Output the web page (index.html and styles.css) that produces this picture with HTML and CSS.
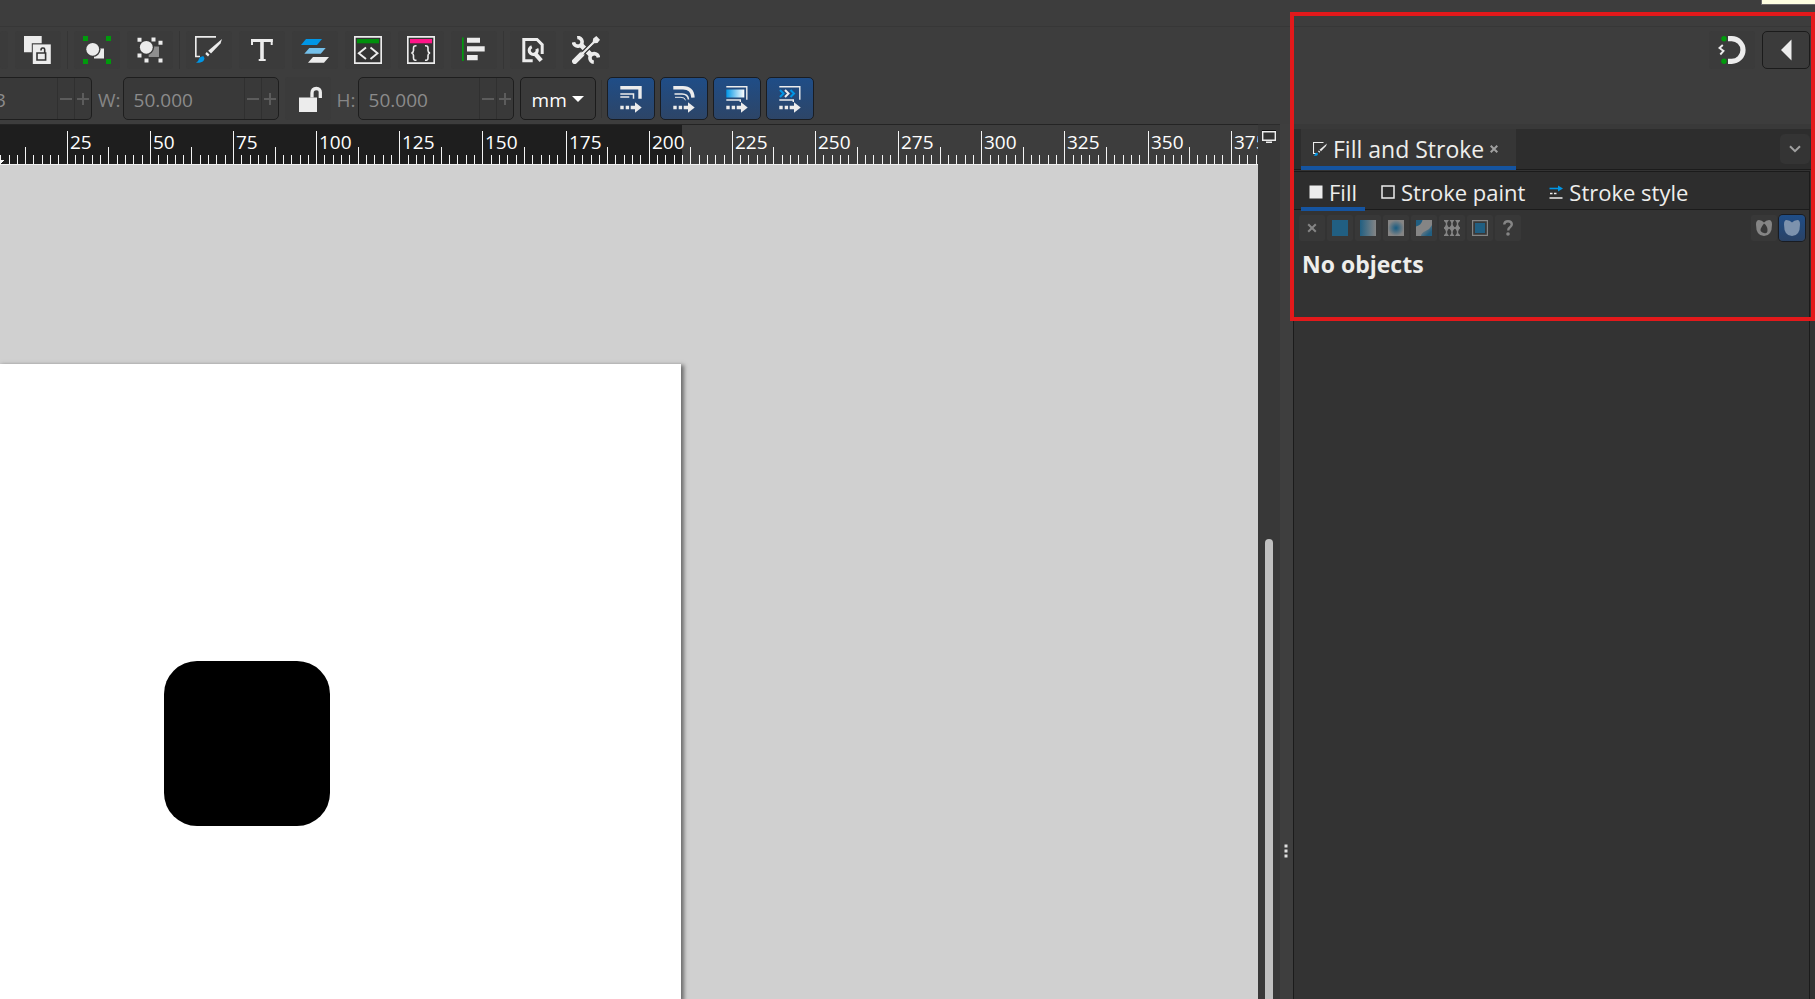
FILE: index.html
```html
<!DOCTYPE html>
<html lang="en">
<head>
<meta charset="utf-8">
<title>Vector editor</title>
<link rel="stylesheet" href="styles.css">
</head>
<body>
<div class="app">
  <div class="menubar"></div>

  <div class="toolbar commands" role="toolbar" aria-label="Commands">
    <button class="tool cut" aria-label="Clone"></button>
    <button class="tool" aria-label="Unlink clone"><svg viewBox="0 0 28 28"><path d="M0 0h17.7v7.3H7.8v9H0z" fill="#ececec"/><path d="M8.8 8.4h18V28h-18z" fill="#ececec"/><path d="M13 17h8.600v7H13zM20.700 17v-3.500q0-1.500-1.500-1.500h-.7q-1.500 0-1.500 2.500" fill="none" stroke="#333" stroke-width="1.600"/></svg></button>
    <span class="sep"></span>
    <button class="tool" aria-label="Group"><svg viewBox="0 0 28 28"><path d="M0 0h5v5H0zM23 0h5v5h-5zM0 23h5v5H0zM23 23h5v5h-5z" fill="#009a0c"/><path d="M11 12.500h10v10H11z" fill="#ececec"/><circle cx="9.700" cy="13.300" r="7.800" fill="#3b3b3b"/><circle cx="9.700" cy="13.300" r="6.400" fill="#ececec"/></svg></button>
    <button class="tool" aria-label="Ungroup"><svg viewBox="0 0 28 28"><path d="M12.700 10.500h10.300v10.500H12.700z" fill="#8f8f8f"/><circle cx="10.300" cy="11.300" r="7.800" fill="#3b3b3b"/><circle cx="10.300" cy="11.300" r="6.400" fill="#ececec"/><path d="M1.500 1.700h4v4h-4zM15.500 1.500h4v4h-4zM22.500 4.700h4v4h-4zM1.500 17.500h4v4h-4zM8.500 22.500h4v4h-4zM22.500 22.500h4v4h-4z" fill="#ececec"/></svg></button>
    <span class="sep"></span>
    <button class="tool" aria-label="Fill and Stroke"><svg viewBox="0 0 28 28"><path d="M21 .8H.8V20.500H5" fill="none" stroke="#ececec" stroke-width="1.700"/><path d="M27 3L25.500 7.500 16 17.500 13.200 14.800z" fill="#ececec"/><path d="M11.700 16l2.800 2.500-1.500 2-2.700-2.500z" fill="#ececec"/><path d="M1 26.700q2.500-1 3-4 1.500-3 4.500-2.500l1 2q-.5 3.500-3.500 4-2 .8-5 .5z" fill="#0096e6"/></svg></button>
    <button class="tool" aria-label="Text and Font"><svg viewBox="0 0 28 28"><g stroke="#ececec" fill="none"><path d="M3 4.500h21.700" stroke-width="3"/><path d="M4 3v6M23.700 3v6" stroke-width="2"/><path d="M14 4v20" stroke-width="3.600"/><path d="M10.700 24h7" stroke-width="2"/></g></svg></button>
    <button class="tool" aria-label="Layers and Objects"><svg viewBox="0 0 28 28"><path d="M5 3h16l-5 6H0z" fill="#0096e6"/><path d="M8.300 12h16.400l-5 5.700H3.300z" fill="#74c0ea"/><path d="M12 21h16l-5 5.700H7z" fill="#ececec"/></svg></button>
    <button class="tool" aria-label="XML Editor"><svg viewBox="0 0 28 28"><path d="M.8.8h26.400v26.400H.8z" fill="#333" stroke="#ececec" stroke-width="1.700"/><path d="M3 3h22v4.300H3z" fill="#008f0c"/><path d="M12 11.500L4.800 17.200 12 23M16.500 11.500l7 5.700-7 5.800" fill="none" stroke="#ececec" stroke-width="1.900"/></svg></button>
    <button class="tool" aria-label="Selectors and CSS"><svg viewBox="0 0 28 28"><path d="M.8.8h26.400v26.400H.8z" fill="#333" stroke="#ececec" stroke-width="1.700"/><path d="M3 3h22v4.300H3z" fill="#ff1588"/><path d="M9.500 9.700Q6.500 9.500 6.500 12v2.500q0 2-2 2.500 2 .5 2 2.500V22q0 2.500 3 2.300M18 9.700q3-.2 3 2.300v2.500q0 2 2 2.500-2 .5-2 2.500V22q0 2.500-3 2.300" fill="none" stroke="#ececec" stroke-width="1.600"/></svg></button>
    <button class="tool" aria-label="Align and Distribute"><svg viewBox="0 0 28 28"><path d="M2 1.500h1.700v23.500H2z" fill="#009a0c"/><path d="M7 1.700h13v5H7zM7 10.300h17.700v5.300H7zM7 19h10.700v5.300H7z" fill="#ececec"/></svg></button>
    <span class="sep"></span>
    <button class="tool" aria-label="Document Properties"><svg viewBox="0 0 28 28"><path d="M13.700 24.700H4.800V3.400h13.200l5.200 5.200V18" fill="none" stroke="#ececec" stroke-width="3"/><path d="M13.500 10.500a4 4 0 1 0 4.500 3" fill="none" stroke="#ececec" stroke-width="3.200" transform="rotate(-12 14 14)"/><path d="M15.500 17l6.700 7.700" stroke="#ececec" stroke-width="4.200"/></svg></button>
    <button class="tool" aria-label="Preferences"><svg viewBox="0 0 28 28"><g fill="none" stroke="#ececec"><path d="M5.200 1.600a4.300 4.300 0 1 1-3.700 4.700" stroke-width="3.600"/><path d="M8.500 8.500l4 4M15.500 15.500l4 4" stroke-width="5"/><path d="M26.500 21.500a4.300 4.300 0 1 0-4.700 4.700" stroke-width="3.600"/><path d="M9 19L24 4" stroke-width="2.200"/><path d="M2.700 25.300l7-7" stroke-width="5.400" stroke-linecap="round"/></g><path d="M24.300 0L28 3.700 25.500 7l-3 .3L20.700 5.500l.5-3z" fill="#ececec"/><path d="M9 16.500L19 6.500M12 18.500L21.500 9" stroke="#3b3b3b" stroke-width="1"/></svg></button>
    <div class="right">
      <button class="tool" aria-label="Snap controls"><svg viewBox="0 0 28 28"><circle cx="6" cy="2.700" r="2.700" fill="#009a0c"/><circle cx="6" cy="25.300" r="2.700" fill="#009a0c"/><path d="M10 2.700h3.700a11.300 11.300 0 0 1 0 22.600H10" fill="none" stroke="#ececec" stroke-width="5.200"/><path d="M4.800 9L1.500 12l4 3-3.200 3.500" fill="none" stroke="#ececec" stroke-width="1.900"/></svg></button>
      <button class="tool framed" aria-label="Collapse"><svg viewBox="0 0 28 28"><path d="M19.500 3.500v21L9 14z" fill="#ececec"/></svg></button>
    </div>
  </div>

  <div class="toolbar options" role="toolbar" aria-label="Tool controls">
    <div class="entry first"><input aria-label="Y" value="3" disabled><button aria-label="Decrease Y" disabled><svg viewBox="0 0 12 12"><path d="M0 6h12"/></svg></button><button aria-label="Increase Y" disabled><svg viewBox="0 0 12 12"><path d="M0 6h12M6 0v12"/></svg></button></div>
    <label for="width">W:</label>
    <div class="entry"><input id="width" value="50.000" disabled><button aria-label="Decrease width" disabled><svg viewBox="0 0 12 12"><path d="M0 6h12"/></svg></button><button aria-label="Increase width" disabled><svg viewBox="0 0 12 12"><path d="M0 6h12M6 0v12"/></svg></button></div>
    <button class="tool lock" aria-label="Lock ratio"><svg viewBox="0 0 28 28"><path d="M5 12.500h18V27H5z" fill="#ececec"/><path d="M18 12.500V8q0-4.500 4.300-4.500T26.300 8v5" fill="none" stroke="#ececec" stroke-width="3.300"/></svg></button>
    <label for="height">H:</label>
    <div class="entry"><input id="height" value="50.000" disabled><button aria-label="Decrease height" disabled><svg viewBox="0 0 12 12"><path d="M0 6h12"/></svg></button><button aria-label="Increase height" disabled><svg viewBox="0 0 12 12"><path d="M0 6h12M6 0v12"/></svg></button></div>
    <div class="unit"><select aria-label="Unit"><option>mm</option></select><svg viewBox="0 0 12 6"><path d="M0 0h12L6 6z" fill="#fff"/></svg></div>
    <span class="sep"></span>
    <div class="toggles">
      <button class="toggle" aria-pressed="true" aria-label="Scale stroke width"><svg viewBox="0 0 28 28" fill="none" stroke="#ececec"><path d="M3.300 2.700h19.700v11" stroke-width="3.400"/><path d="M3.300 9h13.200v4.700M3.300 12h9" stroke-width="1.500"/><path d="M3.300 22.500h3.400M8.700 22.500h3.400M13.700 22.500h5" stroke-width="3.400"/><path d="M18 17.300l6.700 5.200-6.700 5.200z" fill="#ececec" stroke="none"/></svg></button>
      <button class="toggle" aria-pressed="true" aria-label="Scale rounded corners"><svg viewBox="0 0 28 28" fill="none" stroke="#ececec"><path d="M3.300 2.700H13q9.500 0 10 10" stroke-width="3.400"/><path d="M4.500 9H12q6 0 6.500 5.500" stroke-width="1.600"/><path d="M5 12.300h6q4 0 4.500 3" stroke-width="1"/><path d="M3.300 22.500h3.400M8.700 22.500h3.400M13.700 22.500h5" stroke-width="3.400"/><path d="M18 17.300l6.700 5.200-6.700 5.200z" fill="#ececec" stroke="none"/></svg></button>
      <button class="toggle" aria-pressed="true" aria-label="Move gradients"><svg viewBox="0 0 28 28" fill="none" stroke="#ececec"><defs><linearGradient id="sky"><stop offset="0" stop-color="#0096e6"/><stop offset="1" stop-color="#fff"/></linearGradient></defs><path d="M3.300 1.700h20.500v13" stroke-width="1.400"/><path d="M3.300 4.500h18v8h-18z" fill="url(#sky)" stroke="none"/><path d="M3.300 15h14v2" stroke-width="1.400"/><path d="M3.300 22.500h3.400M8.700 22.500h3.400M13.700 22.500h5" stroke-width="3.400"/><path d="M18 17.300l6.700 5.200-6.700 5.200z" fill="#ececec" stroke="none"/></svg></button>
      <button class="toggle" aria-pressed="true" aria-label="Move patterns"><svg viewBox="0 0 28 28" fill="none" stroke="#ececec"><path d="M3.300 1.700h20.500v13" stroke-width="1.400"/><path d="M4 5l3.500 3.500L4 12M14.500 5L18 8.500 14.500 12" stroke="#0096e6" stroke-width="2"/><path d="M9 5l3.500 3.500L9 12" stroke-width="2"/><path d="M3.300 15h14v2" stroke-width="1.400"/><path d="M3.300 22.500h3.400M8.700 22.500h3.400M13.700 22.500h5" stroke-width="3.400"/><path d="M18 17.300l6.700 5.200-6.700 5.200z" fill="#ececec" stroke="none"/></svg></button>
    </div>
  </div>

  <div class="workspace">
    <main class="document">
      <svg class="ruler" id="ruler" aria-label="Horizontal ruler"></svg>
      <div class="canvas">
        <div class="sheet"></div>
        <div class="shape"></div>
      </div>
    </main>
    <div class="scroll">
      <button class="display" aria-label="Color managed display"><svg viewBox="0 0 14 13"><path d="M.7 1.700h12.600v8.600H.7z" fill="#333" stroke="#ececec" stroke-width="1.400"/><path d="M0 .4h14" stroke="#000" stroke-width=".8"/><path d="M4 11.500h6v1.500H4z" fill="#ececec"/></svg></button>
      <div class="thumb"></div>
    </div>
    <div class="sash"><svg viewBox="0 0 4 14"><path d="M.5.5h3v3h-3zM.5 5.500h3v3h-3zM.5 10.500h3v3h-3z" fill="#e0e0e0"/></svg></div>
    <aside class="dock">
      <div class="dock-tabs">
        <div class="dock-tab">
          <svg class="i14" viewBox="0 0 28 28"><path d="M21 1H1V23H6" fill="none" stroke="#ececec" stroke-width="2.200"/><path d="M28 3L26 8 16 18.500 13 15.500z" fill="#ececec"/><path d="M11.500 17l3 2.500-1.500 2-3-2.500z" fill="#ececec"/><path d="M1 28q2.500-1 3-4 1.500-3 4.500-2.500l1.500 2q-.5 3.500-3.500 4z" fill="#0096e6"/></svg>
          <span>Fill and Stroke</span>
          <button class="close" aria-label="Close tab"><svg viewBox="0 0 8 8"><path d="M.7.7l6.600 6.600M7.300.7L.7 7.300" stroke="#a0a0a0" stroke-width="2"/></svg></button>
        </div>
        <button class="menu" aria-label="Dialog menu"><svg viewBox="0 0 12 8"><path d="M1 1.200l5 5 5-5" fill="none" stroke="#a0a0a0" stroke-width="2"/></svg></button>
      </div>
      <section class="notebook">
        <div class="tabs" role="tablist">
          <button class="tab active" role="tab" aria-selected="true"><svg class="i14" viewBox="0 0 14 14"><path d="M.5.5h13v13H.5z" fill="#ececec"/></svg>Fill</button>
          <button class="tab" role="tab" aria-selected="false"><svg class="i14" viewBox="0 0 14 14"><path d="M1 1h12v12H1z" fill="none" stroke="#ececec" stroke-width="1.500"/></svg>Stroke paint</button>
          <button class="tab" role="tab" aria-selected="false"><svg class="i14" viewBox="0 0 14 14"><path d="M.5 3.500h9" stroke="#0096e6" stroke-width="1.600"/><path d="M9 .5l5 3-5 3z" fill="#0096e6"/><path d="M1 8.500h2.500M5 8.500h2.500" stroke="#ececec" stroke-width="1.400"/><path d="M.5 13h13" stroke="#ececec" stroke-width="1.500"/></svg>Stroke style</button>
        </div>
        <div class="paints">
          <button aria-label="No paint"><svg viewBox="0 0 16 16"><path d="M4.200 4.200l7.600 7.600M11.800 4.200l-7.600 7.600" stroke="#858585" stroke-width="2"/></svg></button>
          <button aria-label="Flat color"><svg viewBox="0 0 16 16"><path d="M0 0h16v16H0z" fill="#215f82"/></svg></button>
          <button aria-label="Linear gradient"><svg viewBox="0 0 16 16"><defs><linearGradient id="lin"><stop offset="0" stop-color="#215f82"/><stop offset="1" stop-color="#858585"/></linearGradient></defs><path d="M0 0h16v16H0z" fill="url(#lin)"/></svg></button>
          <button aria-label="Radial gradient"><svg viewBox="0 0 16 16"><defs><radialGradient id="rad"><stop offset=".1" stop-color="#215f82"/><stop offset="1" stop-color="#858585"/></radialGradient></defs><path d="M0 0h16v16H0z" fill="url(#rad)"/></svg></button>
          <button aria-label="Mesh gradient"><svg viewBox="0 0 16 16"><defs><linearGradient id="mesh" x1=".2" y1=".2" x2="1" y2="1"><stop offset="0" stop-color="#858585"/><stop offset=".7" stop-color="#215f82"/></linearGradient></defs><path d="M0 0h16v16H0z" fill="#858585"/><path d="M0 0h6.500Q5.500 5 0 6.500z" fill="#215f82"/><path d="M16 5v11H5q0-3 4.500-5T16 5z" fill="url(#mesh)"/></svg></button>
          <button aria-label="Pattern"><svg viewBox="0 0 16 16"><path d="M0 0h5L2.500 3.500 0 1zM5.500 0h5L8 3.500zM11 0h5v1l-2.500 2.500zM2.500 4L5.200 8 2.500 12 0 8zM8 4l3 4-3 4-3-4zM13.500 4L16 8l-2.500 4-2.700-4zM0 15l2.500-2.500L5 16H0zM8 12.500l2.500 3.500h-5zM13.500 12.500L16 15v1h-5z" fill="#858585"/><path d="M2.500 2v12M8 2v12M13.500 2v12M0 8h16" stroke="#858585" stroke-width="1.400"/></svg></button>
          <button aria-label="Swatch"><svg viewBox="0 0 16 16"><path d="M.6.6h14.800v14.800H.6z" fill="none" stroke="#858585" stroke-width="1.200"/><path d="M3 3h10v10H3z" fill="#215f82"/></svg></button>
          <button aria-label="Unset paint"><svg viewBox="0 0 16 16"><path d="M4.200 4.500Q4.500 1.300 8 1.300t3.800 2.900Q11.800 6 10 7.200 8.200 8.300 8.200 10.500" fill="none" stroke="#858585" stroke-width="2.400"/><circle cx="8" cy="14" r="1.800" fill="#858585"/></svg></button>
          <div class="rules">
            <button aria-label="Even-odd fill rule"><svg viewBox="0 0 16 16"><path fill-rule="evenodd" d="M3 0q3 0 5 2.500Q10 0 13 0q3 0 3 4.500 0 11.500-8 11.500T0 4.500Q0 0 3 0zM8 3.500Q4.500 8 4.500 10T8 13t3.500-3T8 3.500z" fill="#858585"/></svg></button>
            <button class="on" aria-label="Nonzero fill rule" aria-pressed="true"><svg viewBox="0 0 16 16"><path d="M2.500 0Q6 0 8 2.500 10 0 13.500 0 16 0 16 4.500 16 16 8 16T0 4.500Q0 0 2.500 0z" fill="#7d92ad"/></svg></button>
          </div>
        </div>
        <p class="status">No objects</p>
      </section>
    </aside>
  </div>

  <div class="tooltip"></div>
  <div class="highlight"></div>
</div>
<script src="ruler.js"></script>
</body>
</html>
```
FILE: styles.css
```css
* {
  box-sizing: border-box;
}

body {
  margin: 0;
  background: #3d3d3d;
  color: #eeeeec;
  font: 19px/24px "Open Sans", "Noto Sans", sans-serif;
  overflow: hidden;
}

button,
input,
select {
  margin: 0;
  padding: 0;
  border: 0;
  background: none;
  color: inherit;
  font: inherit;
}

svg {
  display: block;
}

.app {
  position: relative;
  display: flex;
  flex-direction: column;
  height: 100vh;
}

.menubar {
  height: 27px;
  border-bottom: 1px solid #373737;
}

.toolbar {
  display: flex;
  align-items: center;
}

.commands {
  gap: 7px;
  height: 46px;
  padding: 0 5px 0 0;
}

.tool {
  flex: none;
  display: flex;
  align-items: center;
  justify-content: center;
  width: 46px;
  height: 38px;
  border-radius: 3px;
  background: #3b3b3b;
}

.tool svg,
.toggle svg {
  width: 28px;
  height: 28px;
}

.tool.cut {
  width: 8px;
}

.tool.framed {
  width: 48px;
  border: 1px solid #1b1b1b;
  border-radius: 5px;
}

.sep {
  flex: none;
  width: 1px;
  height: 38px;
  margin: 0 -1px;
  background: #353535;
}

.right {
  display: flex;
  gap: 7px;
  margin-left: auto;
}

.options {
  gap: 6px;
  height: 51px;
}

.options label {
  margin-right: -4px;
  padding-top: 2px;
  color: #868686;
}

.entry {
  flex: none;
  display: flex;
  width: 156px;
  height: 43px;
  border: 1px solid #1e1e1e;
  border-radius: 5px;
  background: #393939;
  color: #8b8b8b;
  overflow: hidden;
}

.entry input {
  flex: 1;
  min-width: 0;
  padding: 2px 10px 0;
}

.entry button {
  display: flex;
  align-items: center;
  justify-content: center;
  width: 17px;
  border-left: 1px solid #303030;
}

.entry svg {
  width: 12px;
  height: 12px;
  stroke: #5c5c5c;
  stroke-width: 2px;
}

.entry.first {
  width: 92px;
  border-left: 0;
  border-radius: 0 5px 5px 0;
}

.entry.first input {
  padding: 2px 0 0;
  text-indent: -5px;
}

.lock {
  height: 43px;
}

.unit {
  position: relative;
  height: 43px;
}

.unit select {
  appearance: none;
  width: 76px;
  height: 43px;
  padding: 2px 0 0 11px;
  border: 1px solid #1b1b1b;
  border-radius: 5px;
  background: #3a3a3a;
  color: #ffffff;
}

.unit svg {
  position: absolute;
  top: 19px;
  right: 12px;
  width: 12px;
  height: 6px;
  pointer-events: none;
}

.toggles {
  display: flex;
  gap: 5px;
}

.toggle {
  display: flex;
  align-items: center;
  justify-content: center;
  width: 48px;
  height: 43px;
  border: 1px solid #1a1d22;
  border-radius: 5px;
  background: linear-gradient(#1f4d87, #2d4567);
}

.workspace {
  flex: 1;
  display: flex;
  min-height: 0;
}

.document {
  flex: 1;
  min-width: 0;
  display: flex;
  flex-direction: column;
  border-top: 1px solid #242424;
}

.ruler {
  flex: none;
  width: 100%;
  height: 40px;
  border-bottom: 1px solid #f0f0f0;
}

.ruler text {
  fill: #ffffff;
}

.ruler path {
  stroke: #f4f4f4;
  stroke-width: 1;
  shape-rendering: crispEdges;
}

.canvas {
  position: relative;
  flex: 1;
  background: #d0d0d0;
  overflow: hidden;
}

.sheet {
  position: absolute;
  top: 199px;
  left: 0;
  bottom: 0;
  width: 681px;
  background: #ffffff;
  box-shadow: 2px 2px 4px 1px #6c6c6c;
}

.shape {
  position: absolute;
  top: 496px;
  left: 164px;
  width: 166px;
  height: 165px;
  border-radius: 33px;
  background: #000000;
}

.scroll {
  display: flex;
  flex-direction: column;
  width: 22px;
  border-top: 1px solid #2c2c2c;
  background: #383838;
}

.display {
  height: 22px;
  padding: 3px 4px;
}

.display svg {
  width: 14px;
  height: 13px;
}

.thumb {
  flex: 1;
  width: 8px;
  margin: 392px 0 0 7px;
  border-radius: 4px 4px 0 0;
  background: #c0c0c0;
}

.sash {
  width: 13px;
  padding: 720px 0 0 4px;
  background: #3e3e3e;
}

.sash svg {
  width: 4px;
  height: 14px;
}

.dock {
  display: flex;
  flex-direction: column;
  width: 522px;
  border-top: 5px solid #393939;
  background: #333333;
}

.dock-tabs {
  display: flex;
  justify-content: space-between;
  height: 41px;
  padding: 0 5px 0 8px;
  border-bottom: 1px solid #1b1b1b;
  background: #2d2d2d;
  font-size: 23px;
}

.dock-tab {
  display: flex;
  align-items: center;
  gap: 6px;
  width: 215px;
  height: 41px;
  padding: 3px 0 0 12px;
  border-bottom: 4px solid #1554a0;
  background: #363636;
}

.i14 {
  flex: none;
  width: 14px;
  height: 14px;
}

.close svg {
  width: 8px;
  height: 8px;
}

.menu {
  display: flex;
  align-items: center;
  justify-content: center;
  width: 30px;
  height: 30px;
  margin-top: 5px;
  border-radius: 5px;
  background: #343434;
}

.menu svg {
  width: 12px;
  height: 8px;
}

.notebook {
  flex: 1;
  margin: 1px 5px 0 0;
  border: 1px solid #1b1b1b;
  border-bottom: 0;
  background: #333333;
}

.tabs {
  display: flex;
  gap: 8px;
  height: 38px;
  padding-left: 7px;
  border-bottom: 1px solid #1b1b1b;
  background: #2d2d2d;
  font-size: 22px;
}

.tab {
  display: flex;
  align-items: center;
  gap: 6px;
  height: 39px;
  padding: 4px 8px 0;
  border-bottom: 4px solid transparent;
}

.tab.active {
  border-color: #1554a0;
}

.paints {
  display: flex;
  gap: 2px;
  padding: 5px 4px 0 5px;
}

.paints button {
  display: flex;
  align-items: center;
  justify-content: center;
  width: 26px;
  height: 26px;
  border-radius: 2px;
  background: #383838;
}

.paints svg {
  width: 16px;
  height: 16px;
}

.rules {
  display: flex;
  gap: 2px;
  margin-left: auto;
}

.paints .on {
  border-radius: 4px;
  background: linear-gradient(#1f4d87, #2a4265);
  box-shadow: 0 0 0 1px #191c22;
}

.status {
  margin: 11px 8px;
  font-size: 23px;
  font-weight: 700;
}

.tooltip {
  position: absolute;
  top: 0;
  right: 0;
  width: 54px;
  height: 5px;
  border: solid #6a6a6a;
  border-width: 0 0 1px 1px;
  background: #ffffe1;
}

.highlight {
  position: absolute;
  top: 12px;
  right: 0;
  width: 525px;
  height: 309px;
  border: 4px solid #e3191b;
  pointer-events: none;
}
```
FILE: ruler.js
```js
(function () {
  var NS = "http://www.w3.org/2000/svg";
  var ruler = document.getElementById("ruler");
  var origin = -16.4;
  var step = 8.314;
  var pageEnd = 682;

  function add(name, attrs, text) {
    var el = document.createElementNS(NS, name);
    for (var key in attrs) el.setAttribute(key, attrs[key]);
    if (text) el.textContent = text;
    ruler.appendChild(el);
  }

  add("rect", { x: 0, y: 0, width: pageEnd, height: 40, fill: "#1e1e1e" });

  var ticks = "";
  var count = Math.ceil((ruler.clientWidth - origin) / step);
  for (var k = 2; k < count; k++) {
    var x = Math.round(origin + k * step);
    var top = k % 10 === 0 ? 6 : k % 5 === 0 ? 22 : 30;
    ticks += "M" + (x + 0.5) + " " + top + "V40";
    if (k % 10 === 0) {
      add("text", { x: x + 3, y: 24 }, String(k * 2.5));
    }
  }
  add("path", { d: ticks });
  add("path", { d: "M0 35.5h4M0 36.5h3M0 37.5h2" });
})();
```
